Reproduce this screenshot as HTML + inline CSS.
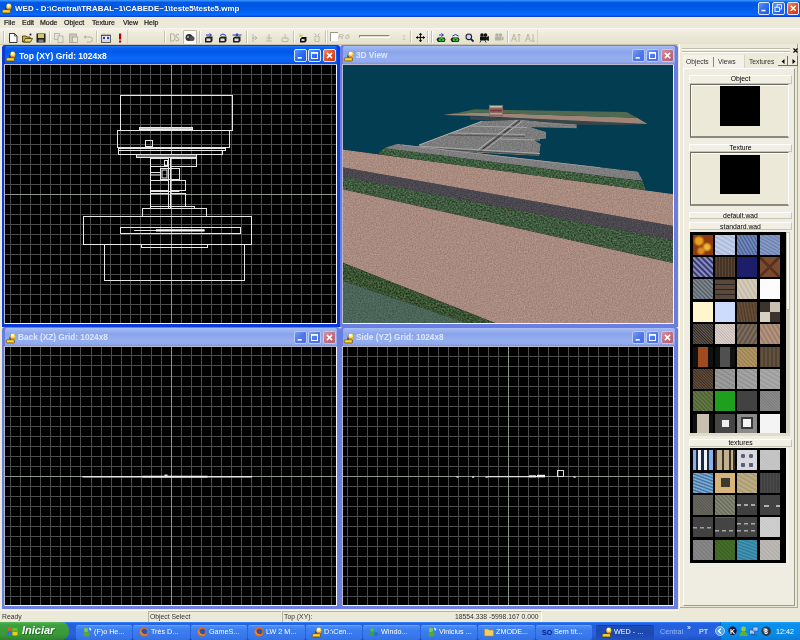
<!DOCTYPE html><html><head><meta charset="utf-8"><title>WED</title><style>
*{margin:0;padding:0;box-sizing:border-box}
html,body{width:800px;height:640px;overflow:hidden;background:#ece9d8;font-family:"Liberation Sans", sans-serif}
body{position:relative}
.a{position:absolute}
.t{position:absolute;white-space:pre;line-height:1;will-change:transform}
svg{position:absolute;overflow:visible}
</style></head><body><div class="a" style="left:0px;top:0px;width:800px;height:17px;background:linear-gradient(to bottom,#3d9bff 0px,#2a80f8 1px,#0058e6 2.5px,#0056e0 6px,#0062f2 11px,#066afa 15px,#0a4fd8 16px,#1535c8 17px)"></div><svg style="left:2px;top:3px;transform:scale(1.0);transform-origin:0 0" width="10" height="10" viewBox="0 0 10 10"><path d="M3.2,6.6 Q3.5,1.2 6.6,0.4 L5,6.8 Z" fill="#20206a" opacity="0.85"/><ellipse cx="6.8" cy="3.4" rx="2.5" ry="3" fill="#f8e040"/><ellipse cx="6.5" cy="2.4" rx="1.5" ry="1.4" fill="#fffad0"/><path d="M5,5.2 Q7,6.6 9.2,4.6" stroke="#e86a20" stroke-width="0.8" fill="none"/><rect x="0.3" y="6.8" width="8.2" height="3.2" rx="0.6" fill="#f0c000" stroke="#2a2a50" stroke-width="0.5"/><rect x="1.2" y="7.6" width="6" height="1" fill="#ffe860"/></svg><div class="t" style="left:15px;top:4.5px;font-size:8px;color:#fff;font-weight:bold;text-shadow:1px 0 0 rgba(0,20,120,.35)">WED - D:\Central\TRABAL~1\CABEDE~1\teste5\teste5.wmp</div><div class="a" style="left:757.5px;top:2px;width:12.5px;height:12.5px;background:linear-gradient(135deg,#5a9cff,#2f6ff0 45%,#1f58e0);border:1px solid #dce8ff;border-radius:2px"></div><svg style="left:757.5px;top:2px;" width="12.5" height="12.5" viewBox="0 0 12.5 12.5"><rect x="3.5000000000000004" y="7.75" width="4.0" height="1.6" fill="#fff"/></svg><div class="a" style="left:772px;top:2px;width:12.5px;height:12.5px;background:linear-gradient(135deg,#5a9cff,#2f6ff0 45%,#1f58e0);border:1px solid #dce8ff;border-radius:2px"></div><svg style="left:772px;top:2px;" width="12.5" height="12.5" viewBox="0 0 12.5 12.5"><rect x="5.0" y="2.75" width="4.5" height="4.25" fill="none" stroke="#fff" stroke-width="0.9"/><rect x="3.0" y="5.25" width="4.5" height="4.25" fill="#2f6ff0" stroke="#fff" stroke-width="0.9"/></svg><div class="a" style="left:786.5px;top:2px;width:12.5px;height:12.5px;background:linear-gradient(135deg,#f08a6a,#e0552e 45%,#c83a18);border:1px solid #dce8ff;border-radius:2px"></div><svg style="left:786.5px;top:2px;" width="12.5" height="12.5" viewBox="0 0 12.5 12.5"><path d="M3.75,3.75 L8.75,8.75 M8.75,3.75 L3.75,8.75" stroke="#fff" stroke-width="1.5"/></svg><div class="a" style="left:0px;top:17px;width:800px;height:11px;background:#ece9d8"></div><div class="t" style="left:4px;top:18.6px;font-size:7px;color:#1a1a1a;font-weight:normal;-webkit-text-stroke:0.2px #1a1a1a">File</div><div class="t" style="left:21.5px;top:18.6px;font-size:7px;color:#1a1a1a;font-weight:normal;-webkit-text-stroke:0.2px #1a1a1a">Edit</div><div class="t" style="left:40px;top:18.6px;font-size:7px;color:#1a1a1a;font-weight:normal;-webkit-text-stroke:0.2px #1a1a1a">Mode</div><div class="t" style="left:64px;top:18.6px;font-size:7px;color:#1a1a1a;font-weight:normal;-webkit-text-stroke:0.2px #1a1a1a">Object</div><div class="t" style="left:92px;top:18.6px;font-size:7px;color:#1a1a1a;font-weight:normal;-webkit-text-stroke:0.2px #1a1a1a">Texture</div><div class="t" style="left:123px;top:18.6px;font-size:7px;color:#1a1a1a;font-weight:normal;-webkit-text-stroke:0.2px #1a1a1a">View</div><div class="t" style="left:144px;top:18.6px;font-size:7px;color:#1a1a1a;font-weight:normal;-webkit-text-stroke:0.2px #1a1a1a">Help</div><div class="a" style="left:0px;top:28px;width:800px;height:1px;background:#f8f6ee"></div><div class="a" style="left:0px;top:29px;width:800px;height:16px;background:linear-gradient(to bottom,#f4f2e8,#ece9d8 40%,#e4e0cc)"></div><div class="a" style="left:0px;top:44px;width:800px;height:1px;background:#c8c4b0"></div><div class="a" style="left:3px;top:31px;width:1px;height:12px;background:#c5c2b2"></div><div class="a" style="left:4px;top:31px;width:1px;height:12px;background:#fff"></div><div class="a" style="left:49px;top:31px;width:1px;height:12px;background:#c5c2b2"></div><div class="a" style="left:50px;top:31px;width:1px;height:12px;background:#fff"></div><div class="a" style="left:96px;top:31px;width:1px;height:12px;background:#c5c2b2"></div><div class="a" style="left:97px;top:31px;width:1px;height:12px;background:#fff"></div><div class="a" style="left:164px;top:31px;width:1px;height:12px;background:#c5c2b2"></div><div class="a" style="left:165px;top:31px;width:1px;height:12px;background:#fff"></div><div class="a" style="left:198.5px;top:31px;width:1px;height:12px;background:#c5c2b2"></div><div class="a" style="left:199.5px;top:31px;width:1px;height:12px;background:#fff"></div><div class="a" style="left:245.5px;top:31px;width:1px;height:12px;background:#c5c2b2"></div><div class="a" style="left:246.5px;top:31px;width:1px;height:12px;background:#fff"></div><div class="a" style="left:292.5px;top:31px;width:1px;height:12px;background:#c5c2b2"></div><div class="a" style="left:293.5px;top:31px;width:1px;height:12px;background:#fff"></div><div class="a" style="left:324.5px;top:31px;width:1px;height:12px;background:#c5c2b2"></div><div class="a" style="left:325.5px;top:31px;width:1px;height:12px;background:#fff"></div><div class="a" style="left:410px;top:31px;width:1px;height:12px;background:#c5c2b2"></div><div class="a" style="left:411px;top:31px;width:1px;height:12px;background:#fff"></div><div class="a" style="left:427px;top:31px;width:1px;height:12px;background:#c5c2b2"></div><div class="a" style="left:428px;top:31px;width:1px;height:12px;background:#fff"></div><div class="a" style="left:431px;top:31px;width:1px;height:12px;background:#c5c2b2"></div><div class="a" style="left:432px;top:31px;width:1px;height:12px;background:#fff"></div><div class="a" style="left:506.5px;top:31px;width:1px;height:12px;background:#c5c2b2"></div><div class="a" style="left:507.5px;top:31px;width:1px;height:12px;background:#fff"></div><div class="a" style="left:127px;top:30px;width:1px;height:14px;background:#d8d4c2"></div><div class="a" style="left:327px;top:30px;width:1px;height:14px;background:#d8d4c2"></div><div class="a" style="left:537px;top:30px;width:1px;height:14px;background:#d8d4c2"></div><svg style="left:8.5px;top:32.5px;" width="9" height="10" viewBox="0 0 9 10"><path d="M0.5,0.5 H5.5 L8,3 V9.5 H0.5 Z" fill="#fff" stroke="#222" stroke-width="0.9"/><path d="M5.5,0.5 V3 H8" fill="none" stroke="#222" stroke-width="0.7"/></svg><svg style="left:21.5px;top:32.5px;" width="11" height="10" viewBox="0 0 11 10"><path d="M0.5,3 H4 L5,4 H8 V9 H0.5 Z" fill="#c8b040" stroke="#3a3000" stroke-width="0.8"/><path d="M1.5,9 L3.5,5.5 H10.5 L8.5,9 Z" fill="#e8d870" stroke="#3a3000" stroke-width="0.8"/><circle cx="8.5" cy="1.5" r="1" fill="#222"/></svg><svg style="left:36px;top:32.5px;" width="10" height="10" viewBox="0 0 10 10"><rect x="0.5" y="0.5" width="9" height="9" fill="#202020"/><rect x="2" y="1" width="6" height="4" fill="#d0c870"/><rect x="2.5" y="6.5" width="5" height="3" fill="#808080"/></svg><svg style="left:54px;top:32.5px;" width="10" height="10" viewBox="0 0 10 10"><rect x="0.5" y="0.5" width="5" height="6" fill="#e8e6dc" stroke="#b0ae9e" stroke-width="0.8"/><rect x="4" y="3" width="5" height="6.5" fill="#e8e6dc" stroke="#b0ae9e" stroke-width="0.8"/></svg><svg style="left:69px;top:32.5px;" width="10" height="10" viewBox="0 0 10 10"><rect x="0.5" y="1" width="7" height="8.5" fill="#c8c6b8" stroke="#a8a696" stroke-width="0.8"/><rect x="3.5" y="4" width="5" height="5.5" fill="#e8e6dc" stroke="#a8a696" stroke-width="0.8"/></svg><svg style="left:82.5px;top:32.5px;" width="10" height="10" viewBox="0 0 10 10"><path d="M2,4 H7 A2.5,2.5 0 0 1 7,9 H4" fill="none" stroke="#b4b2a2" stroke-width="1"/><path d="M0.5,4 L3,2 V6 Z" fill="#b4b2a2"/></svg><svg style="left:101px;top:32.5px;" width="10" height="10" viewBox="0 0 10 10"><rect x="0.5" y="2.5" width="9" height="7" fill="#d8d8d8" stroke="#404040" stroke-width="0.8"/><rect x="1.5" y="3.5" width="7" height="3" fill="#fff"/><circle cx="3" cy="5" r="1.2" fill="#3030c0"/><circle cx="7" cy="5" r="1.2" fill="#3030c0"/><path d="M1,1 V2.5 M3,0.5 V2.5 M5,1 V2.5 M7,0.5 V2.5 M9,1 V2.5" stroke="#404040" stroke-width="0.6"/></svg><svg style="left:117.5px;top:33px;" width="5" height="10" viewBox="0 0 5 10"><rect x="1" y="0.5" width="2.2" height="6" fill="#b00000"/><rect x="1" y="7.5" width="2.2" height="2" fill="#b00000"/></svg><svg style="left:170px;top:33px;" width="10" height="10" viewBox="0 0 10 10"><path d="M0.5,1 H3 Q5,1 5,4.5 Q5,8 3,8 H0.5 Z" fill="none" stroke="#aaa89a" stroke-width="0.9"/><path d="M9,1.5 Q6,0.5 6,3 Q6,4.5 8,4.8 Q9.5,5.5 8.5,7.5 Q7,8.5 5.5,7" fill="none" stroke="#aaa89a" stroke-width="0.9"/></svg><div class="a" style="left:183px;top:30px;width:13.5px;height:14.5px;background:#fbfaf6;border:1px solid #c0bcaa;border-radius:1px"></div><svg style="left:185px;top:33px;" width="10" height="10" viewBox="0 0 10 10"><ellipse cx="4" cy="4.5" rx="3.5" ry="3.5" fill="#303030"/><ellipse cx="7" cy="5.5" rx="2.5" ry="2.5" fill="#505050"/><circle cx="3" cy="4" r="1" fill="#c0c0c0"/></svg><svg style="left:204px;top:32.5px;" width="10" height="10" viewBox="0 0 10 10"><path d="M2,2 H7 M5.5,0.5 L7.5,2 L5.5,3.5" stroke="#2030d0" stroke-width="1" fill="none"/><path d="M1,5 L3,3.5 H8.5 V8 L7,9.5 H1 Z" fill="#202020"/><rect x="2.5" y="5.5" width="4" height="2.5" fill="#e0e0e0"/></svg><svg style="left:218px;top:32.5px;" width="10" height="10" viewBox="0 0 10 10"><path d="M2,2.5 Q5,-0.5 8,2.5" stroke="#2030d0" stroke-width="1" fill="none"/><path d="M1,5 L3,3.5 H8.5 V8 L7,9.5 H1 Z" fill="#202020"/><rect x="2.5" y="5.5" width="4" height="2.5" fill="#e0e0e0"/></svg><svg style="left:232px;top:32.5px;" width="10" height="10" viewBox="0 0 10 10"><path d="M0.5,2 H9.5 M5,0 V3" stroke="#2030d0" stroke-width="1" fill="none"/><circle cx="5" cy="2" r="1" fill="#2030d0"/><path d="M1,5 L3,3.5 H8.5 V8 L7,9.5 H1 Z" fill="#202020"/><rect x="2.5" y="5.5" width="4" height="2.5" fill="#e0e0e0"/></svg><svg style="left:250.5px;top:33px;" width="8" height="10" viewBox="0 0 8 10"><path d="M1,5 H6 M4,3 L6,5 L4,7 M2,1 V9" stroke="#b4b2a4" stroke-width="0.9" fill="none"/></svg><svg style="left:265px;top:33px;" width="8" height="10" viewBox="0 0 8 10"><path d="M1,8 H7 M1,5 H7 M4,1 V8" stroke="#b4b2a4" stroke-width="0.9" fill="none"/></svg><svg style="left:280.5px;top:33px;" width="8" height="10" viewBox="0 0 8 10"><path d="M1,8.5 H7 V5 H1 Z M4,1 V5" stroke="#b4b2a4" stroke-width="0.9" fill="none"/></svg><svg style="left:297.5px;top:32.5px;" width="10" height="10" viewBox="0 0 10 10"><path d="M2,0.5 L3,2.5 L5,1 L4,3.5 L1,3.5 Z" fill="#b8d030"/><path d="M2,6 L4,4 H8.5 V8 L7,9.5 H2 Z" fill="#101010"/><rect x="3.5" y="6" width="3" height="2" fill="#d0d0d0"/></svg><svg style="left:312.5px;top:33px;" width="8" height="10" viewBox="0 0 8 10"><path d="M1.5,0.5 L3,2 M6.5,0.5 L5,2 M2,3 H6 V8.5 H2 Z" stroke="#b4b2a4" stroke-width="0.9" fill="none"/></svg><div class="a" style="left:330px;top:32px;width:7.5px;height:9px;background:#fff;border-left:1.5px solid #9a9888;border-top:1.5px solid #9a9888"></div><div class="t" style="left:338px;top:33px;font-size:8px;color:#c0beb0;font-weight:bold;font-style:italic">R</div><div class="t" style="left:345px;top:33px;font-size:8px;color:#c0beb0;font-weight:bold;font-style:italic">ö</div><div class="a" style="left:359px;top:35px;width:31px;height:3px;border-top:1px solid #8a8878;border-left:1px solid #8a8878;border-bottom:1px solid #fff;border-right:1px solid #fff;background:#e0dccb"></div><div class="t" style="left:402px;top:33.5px;font-size:7px;color:#c0beb0;font-weight:normal;">1</div><svg style="left:416px;top:33px;" width="9" height="9" viewBox="0 0 9 9"><path d="M4.5,0 V9 M0,4.5 H9" stroke="#111" stroke-width="1.2"/><path d="M4.5,0 L2.8,2 H6.2 Z M4.5,9 L2.8,7 H6.2 Z M0,4.5 L2,2.8 V6.2 Z M9,4.5 L7,2.8 V6.2 Z" fill="#111"/></svg><svg style="left:435.5px;top:32.5px;" width="10" height="10" viewBox="0 0 10 10"><path d="M3,2 H7 M5.5,0.5 L7.5,2 L5.5,3.5" stroke="#2030d0" stroke-width="1" fill="none"/><path d="M0.5,6.5 L2,4.5 H8.5 L9.5,6.5 L8.5,9 H2 Z" fill="#102010"/><ellipse cx="5.5" cy="6.7" rx="3" ry="1.6" fill="#40c040"/><circle cx="5.5" cy="6.7" r="0.8" fill="#101010"/></svg><svg style="left:449.5px;top:32.5px;" width="10" height="10" viewBox="0 0 10 10"><path d="M2.5,3 Q5.5,0 8.5,3" stroke="#2030d0" stroke-width="1" fill="none"/><path d="M0.5,6.5 L2,4.5 H8.5 L9.5,6.5 L8.5,9 H2 Z" fill="#102010"/><ellipse cx="5.5" cy="6.7" rx="3" ry="1.6" fill="#40c040"/><circle cx="5.5" cy="6.7" r="0.8" fill="#101010"/></svg><svg style="left:465px;top:32.5px;" width="9" height="9" viewBox="0 0 9 9"><circle cx="3.8" cy="3.8" r="2.8" fill="#c8d0ff" stroke="#202020" stroke-width="1.1"/><path d="M5.8,5.8 L8.5,8.5" stroke="#202020" stroke-width="1.8"/></svg><svg style="left:479px;top:33px;" width="10" height="10" viewBox="0 0 10 10"><circle cx="3" cy="2" r="1.8" fill="#101010"/><circle cx="6.5" cy="2" r="1.8" fill="#101010"/><rect x="1" y="3.5" width="6.5" height="4" fill="#101010"/><path d="M7.5,4.5 L9.5,3.5 V7.5 L7.5,6.5 Z M2,7.5 L1,9.5 M6,7.5 L7,9.5" fill="#101010" stroke="#101010" stroke-width="0.8"/></svg><svg style="left:493.5px;top:33px;" width="10" height="10" viewBox="0 0 10 10"><circle cx="3" cy="2" r="1.8" fill="#b4b2a4"/><circle cx="6.5" cy="2" r="1.8" fill="#b4b2a4"/><rect x="1" y="3.5" width="6.5" height="4" fill="#b4b2a4"/><path d="M7.5,4.5 L9.5,3.5 V7.5 L7.5,6.5 Z" fill="#b4b2a4"/></svg><svg style="left:510.5px;top:33px;" width="10" height="10" viewBox="0 0 10 10"><path d="M0.5,8.5 L3,1 L5.5,8.5 M1.5,6 H4.5 M8,9 V1 M6.5,2.5 L8,1 L9.5,2.5" stroke="#b4b2a4" stroke-width="0.9" fill="none"/></svg><svg style="left:525px;top:33px;" width="10" height="10" viewBox="0 0 10 10"><path d="M0.5,8.5 L3,1 L5.5,8.5 M1.5,6 H4.5 M8,1 V9 M6.5,7.5 L8,9 L9.5,7.5" stroke="#b4b2a4" stroke-width="0.9" fill="none"/></svg><div class="a" style="left:0px;top:45px;width:679px;height:565px;background:#ece9d8"></div><div class="a" style="left:2px;top:45px;width:338px;height:282px;background:#0a3bd6;border-radius:3px 3px 0 0"></div><div class="a" style="left:5px;top:46px;width:332px;height:18px;background:linear-gradient(to bottom,#2a7cf8 0px,#0a5ef0 2px,#0058e8 6px,#0a68f8 12px,#0a60f0 16px,#0848d8 18px);border-radius:2px 2px 0 0"></div><svg style="left:5.8px;top:50.5px;transform:scale(1.0);transform-origin:0 0" width="10" height="10" viewBox="0 0 10 10"><path d="M3.2,6.6 Q3.5,1.2 6.6,0.4 L5,6.8 Z" fill="#20206a" opacity="0.85"/><ellipse cx="6.8" cy="3.4" rx="2.5" ry="3" fill="#f8e040"/><ellipse cx="6.5" cy="2.4" rx="1.5" ry="1.4" fill="#fffad0"/><path d="M5,5.2 Q7,6.6 9.2,4.6" stroke="#e86a20" stroke-width="0.8" fill="none"/><rect x="0.3" y="6.8" width="8.2" height="3.2" rx="0.6" fill="#f0c000" stroke="#2a2a50" stroke-width="0.5"/><rect x="1.2" y="7.6" width="6" height="1" fill="#ffe860"/></svg><div class="t" style="left:18.5px;top:52px;font-size:8.5px;color:#fff;font-weight:bold;">Top (XY) Grid: 1024x8</div><div class="a" style="left:323px;top:49px;width:13px;height:13px;background:linear-gradient(135deg,#f08a6a,#e0552e 45%,#c83a18);border:1px solid #dce8ff;border-radius:2px"></div><svg style="left:323px;top:49px;" width="13" height="13" viewBox="0 0 13 13"><path d="M3.9,3.9 L9.1,9.1 M9.1,3.9 L3.9,9.1" stroke="#fff" stroke-width="1.5"/></svg><div class="a" style="left:308px;top:49px;width:13px;height:13px;background:linear-gradient(135deg,#5a9cff,#2f6ff0 45%,#1f58e0);border:1px solid #dce8ff;border-radius:2px"></div><svg style="left:308px;top:49px;" width="13" height="13" viewBox="0 0 13 13"><rect x="3.5100000000000002" y="3.5100000000000002" width="5.98" height="5.98" fill="none" stroke="#fff" stroke-width="1"/><rect x="3.5100000000000002" y="3.5100000000000002" width="5.98" height="1.3" fill="#fff"/></svg><div class="a" style="left:294px;top:49px;width:13px;height:13px;background:linear-gradient(135deg,#5a9cff,#2f6ff0 45%,#1f58e0);border:1px solid #dce8ff;border-radius:2px"></div><svg style="left:294px;top:49px;" width="13" height="13" viewBox="0 0 13 13"><rect x="3.6400000000000006" y="8.06" width="4.16" height="1.6" fill="#fff"/></svg><div class="a" style="left:340px;top:45px;width:338px;height:282px;background:#6a7ee2;border-radius:3px 3px 0 0"></div><div class="a" style="left:343px;top:46px;width:332px;height:18px;background:linear-gradient(to bottom,#aac0f4 0px,#9cb4f0 2px,#8aa4ec 6px,#94aeee 12px,#90aaee 16px,#7c94e0 18px);border-radius:2px 2px 0 0"></div><svg style="left:343.8px;top:50.5px;transform:scale(1.0);transform-origin:0 0" width="10" height="10" viewBox="0 0 10 10"><path d="M3.2,6.6 Q3.5,1.2 6.6,0.4 L5,6.8 Z" fill="#20206a" opacity="0.85"/><ellipse cx="6.8" cy="3.4" rx="2.5" ry="3" fill="#f8e040"/><ellipse cx="6.5" cy="2.4" rx="1.5" ry="1.4" fill="#fffad0"/><path d="M5,5.2 Q7,6.6 9.2,4.6" stroke="#e86a20" stroke-width="0.8" fill="none"/><rect x="0.3" y="6.8" width="8.2" height="3.2" rx="0.6" fill="#f0c000" stroke="#2a2a50" stroke-width="0.5"/><rect x="1.2" y="7.6" width="6" height="1" fill="#ffe860"/></svg><div class="t" style="left:356px;top:52px;font-size:8.25px;color:#dce6fc;font-weight:bold;">3D View</div><div class="a" style="left:661px;top:49px;width:13px;height:13px;background:linear-gradient(135deg,#d890a0,#c07080 50%,#b06070);border:1px solid #b8c8f8;border-radius:2px"></div><svg style="left:661px;top:49px;" width="13" height="13" viewBox="0 0 13 13"><path d="M3.9,3.9 L9.1,9.1 M9.1,3.9 L3.9,9.1" stroke="#fff" stroke-width="1.5"/></svg><div class="a" style="left:646px;top:49px;width:13px;height:13px;background:linear-gradient(135deg,#7a9cf4,#5078e8 50%,#4a6ee0);border:1px solid #b8c8f8;border-radius:2px"></div><svg style="left:646px;top:49px;" width="13" height="13" viewBox="0 0 13 13"><rect x="3.5100000000000002" y="3.5100000000000002" width="5.98" height="5.98" fill="none" stroke="#fff" stroke-width="1"/><rect x="3.5100000000000002" y="3.5100000000000002" width="5.98" height="1.3" fill="#fff"/></svg><div class="a" style="left:632px;top:49px;width:13px;height:13px;background:linear-gradient(135deg,#7a9cf4,#5078e8 50%,#4a6ee0);border:1px solid #b8c8f8;border-radius:2px"></div><svg style="left:632px;top:49px;" width="13" height="13" viewBox="0 0 13 13"><rect x="3.6400000000000006" y="8.06" width="4.16" height="1.6" fill="#fff"/></svg><div class="a" style="left:2px;top:327px;width:338px;height:283px;background:#6a7ee2;border-radius:3px 3px 0 0"></div><div class="a" style="left:5px;top:328px;width:332px;height:18px;background:linear-gradient(to bottom,#aac0f4 0px,#9cb4f0 2px,#8aa4ec 6px,#94aeee 12px,#90aaee 16px,#7c94e0 18px);border-radius:2px 2px 0 0"></div><svg style="left:5.8px;top:332.5px;transform:scale(1.0);transform-origin:0 0" width="10" height="10" viewBox="0 0 10 10"><path d="M3.2,6.6 Q3.5,1.2 6.6,0.4 L5,6.8 Z" fill="#20206a" opacity="0.85"/><ellipse cx="6.8" cy="3.4" rx="2.5" ry="3" fill="#f8e040"/><ellipse cx="6.5" cy="2.4" rx="1.5" ry="1.4" fill="#fffad0"/><path d="M5,5.2 Q7,6.6 9.2,4.6" stroke="#e86a20" stroke-width="0.8" fill="none"/><rect x="0.3" y="6.8" width="8.2" height="3.2" rx="0.6" fill="#f0c000" stroke="#2a2a50" stroke-width="0.5"/><rect x="1.2" y="7.6" width="6" height="1" fill="#ffe860"/></svg><div class="t" style="left:18px;top:334px;font-size:8.25px;color:#dce6fc;font-weight:bold;">Back (XZ) Grid: 1024x8</div><div class="a" style="left:323px;top:331px;width:13px;height:13px;background:linear-gradient(135deg,#d890a0,#c07080 50%,#b06070);border:1px solid #b8c8f8;border-radius:2px"></div><svg style="left:323px;top:331px;" width="13" height="13" viewBox="0 0 13 13"><path d="M3.9,3.9 L9.1,9.1 M9.1,3.9 L3.9,9.1" stroke="#fff" stroke-width="1.5"/></svg><div class="a" style="left:308px;top:331px;width:13px;height:13px;background:linear-gradient(135deg,#7a9cf4,#5078e8 50%,#4a6ee0);border:1px solid #b8c8f8;border-radius:2px"></div><svg style="left:308px;top:331px;" width="13" height="13" viewBox="0 0 13 13"><rect x="3.5100000000000002" y="3.5100000000000002" width="5.98" height="5.98" fill="none" stroke="#fff" stroke-width="1"/><rect x="3.5100000000000002" y="3.5100000000000002" width="5.98" height="1.3" fill="#fff"/></svg><div class="a" style="left:294px;top:331px;width:13px;height:13px;background:linear-gradient(135deg,#7a9cf4,#5078e8 50%,#4a6ee0);border:1px solid #b8c8f8;border-radius:2px"></div><svg style="left:294px;top:331px;" width="13" height="13" viewBox="0 0 13 13"><rect x="3.6400000000000006" y="8.06" width="4.16" height="1.6" fill="#fff"/></svg><div class="a" style="left:340px;top:327px;width:338px;height:283px;background:#6a7ee2;border-radius:3px 3px 0 0"></div><div class="a" style="left:343px;top:328px;width:332px;height:18px;background:linear-gradient(to bottom,#aac0f4 0px,#9cb4f0 2px,#8aa4ec 6px,#94aeee 12px,#90aaee 16px,#7c94e0 18px);border-radius:2px 2px 0 0"></div><svg style="left:343.8px;top:332.5px;transform:scale(1.0);transform-origin:0 0" width="10" height="10" viewBox="0 0 10 10"><path d="M3.2,6.6 Q3.5,1.2 6.6,0.4 L5,6.8 Z" fill="#20206a" opacity="0.85"/><ellipse cx="6.8" cy="3.4" rx="2.5" ry="3" fill="#f8e040"/><ellipse cx="6.5" cy="2.4" rx="1.5" ry="1.4" fill="#fffad0"/><path d="M5,5.2 Q7,6.6 9.2,4.6" stroke="#e86a20" stroke-width="0.8" fill="none"/><rect x="0.3" y="6.8" width="8.2" height="3.2" rx="0.6" fill="#f0c000" stroke="#2a2a50" stroke-width="0.5"/><rect x="1.2" y="7.6" width="6" height="1" fill="#ffe860"/></svg><div class="t" style="left:356px;top:334px;font-size:8.25px;color:#dce6fc;font-weight:bold;">Side (YZ) Grid: 1024x8</div><div class="a" style="left:661px;top:331px;width:13px;height:13px;background:linear-gradient(135deg,#d890a0,#c07080 50%,#b06070);border:1px solid #b8c8f8;border-radius:2px"></div><svg style="left:661px;top:331px;" width="13" height="13" viewBox="0 0 13 13"><path d="M3.9,3.9 L9.1,9.1 M9.1,3.9 L3.9,9.1" stroke="#fff" stroke-width="1.5"/></svg><div class="a" style="left:646px;top:331px;width:13px;height:13px;background:linear-gradient(135deg,#7a9cf4,#5078e8 50%,#4a6ee0);border:1px solid #b8c8f8;border-radius:2px"></div><svg style="left:646px;top:331px;" width="13" height="13" viewBox="0 0 13 13"><rect x="3.5100000000000002" y="3.5100000000000002" width="5.98" height="5.98" fill="none" stroke="#fff" stroke-width="1"/><rect x="3.5100000000000002" y="3.5100000000000002" width="5.98" height="1.3" fill="#fff"/></svg><div class="a" style="left:632px;top:331px;width:13px;height:13px;background:linear-gradient(135deg,#7a9cf4,#5078e8 50%,#4a6ee0);border:1px solid #b8c8f8;border-radius:2px"></div><svg style="left:632px;top:331px;" width="13" height="13" viewBox="0 0 13 13"><rect x="3.6400000000000006" y="8.06" width="4.16" height="1.6" fill="#fff"/></svg><div class="a" style="left:4px;top:64px;width:333px;height:260px;background:#f4f4f4;border-top:1px solid #b8b8c8;border-left:1px solid #b8b8c8"></div><div class="a" style="left:5px;top:65px;width:331px;height:258px;background:#000;overflow:hidden"><svg style="left:0;top:0" width="331" height="258"><g shape-rendering="crispEdges"><rect x="5" y="0" width="1" height="258" fill="#4c4c4c"/><rect x="15" y="0" width="1" height="258" fill="#4c4c4c"/><rect x="25" y="0" width="1" height="258" fill="#4c4c4c"/><rect x="35" y="0" width="1" height="258" fill="#4c4c4c"/><rect x="45" y="0" width="1" height="258" fill="#4c4c4c"/><rect x="55" y="0" width="1" height="258" fill="#4c4c4c"/><rect x="65" y="0" width="1" height="258" fill="#4c4c4c"/><rect x="75" y="0" width="1" height="258" fill="#4c4c4c"/><rect x="85" y="0" width="1" height="258" fill="#4c4c4c"/><rect x="95" y="0" width="1" height="258" fill="#4c4c4c"/><rect x="105" y="0" width="1" height="258" fill="#4c4c4c"/><rect x="115" y="0" width="1" height="258" fill="#4c4c4c"/><rect x="125" y="0" width="1" height="258" fill="#4c4c4c"/><rect x="135" y="0" width="1" height="258" fill="#4c4c4c"/><rect x="145" y="0" width="1" height="258" fill="#4c4c4c"/><rect x="155" y="0" width="1" height="258" fill="#4c4c4c"/><rect x="176" y="0" width="1" height="258" fill="#4c4c4c"/><rect x="186" y="0" width="1" height="258" fill="#4c4c4c"/><rect x="196" y="0" width="1" height="258" fill="#4c4c4c"/><rect x="206" y="0" width="1" height="258" fill="#4c4c4c"/><rect x="216" y="0" width="1" height="258" fill="#4c4c4c"/><rect x="226" y="0" width="1" height="258" fill="#4c4c4c"/><rect x="236" y="0" width="1" height="258" fill="#4c4c4c"/><rect x="246" y="0" width="1" height="258" fill="#4c4c4c"/><rect x="256" y="0" width="1" height="258" fill="#4c4c4c"/><rect x="266" y="0" width="1" height="258" fill="#4c4c4c"/><rect x="276" y="0" width="1" height="258" fill="#4c4c4c"/><rect x="286" y="0" width="1" height="258" fill="#4c4c4c"/><rect x="296" y="0" width="1" height="258" fill="#4c4c4c"/><rect x="306" y="0" width="1" height="258" fill="#4c4c4c"/><rect x="316" y="0" width="1" height="258" fill="#4c4c4c"/><rect x="326" y="0" width="1" height="258" fill="#4c4c4c"/><rect x="0" y="9" width="331" height="1" fill="#4c4c4c"/><rect x="0" y="19" width="331" height="1" fill="#4c4c4c"/><rect x="0" y="29" width="331" height="1" fill="#4c4c4c"/><rect x="0" y="39" width="331" height="1" fill="#4c4c4c"/><rect x="0" y="49" width="331" height="1" fill="#4c4c4c"/><rect x="0" y="59" width="331" height="1" fill="#4c4c4c"/><rect x="0" y="69" width="331" height="1" fill="#4c4c4c"/><rect x="0" y="79" width="331" height="1" fill="#4c4c4c"/><rect x="0" y="89" width="331" height="1" fill="#4c4c4c"/><rect x="0" y="99" width="331" height="1" fill="#4c4c4c"/><rect x="0" y="109" width="331" height="1" fill="#4c4c4c"/><rect x="0" y="119" width="331" height="1" fill="#4c4c4c"/><rect x="0" y="139" width="331" height="1" fill="#4c4c4c"/><rect x="0" y="149" width="331" height="1" fill="#4c4c4c"/><rect x="0" y="159" width="331" height="1" fill="#4c4c4c"/><rect x="0" y="169" width="331" height="1" fill="#4c4c4c"/><rect x="0" y="179" width="331" height="1" fill="#4c4c4c"/><rect x="0" y="189" width="331" height="1" fill="#4c4c4c"/><rect x="0" y="199" width="331" height="1" fill="#4c4c4c"/><rect x="0" y="209" width="331" height="1" fill="#4c4c4c"/><rect x="0" y="219" width="331" height="1" fill="#4c4c4c"/><rect x="0" y="229" width="331" height="1" fill="#4c4c4c"/><rect x="0" y="239" width="331" height="1" fill="#4c4c4c"/><rect x="0" y="249" width="331" height="1" fill="#4c4c4c"/><rect x="166" y="0" width="1" height="258" fill="#8e988e"/><rect x="0" y="129" width="331" height="1" fill="#8e988e"/></g><rect x="115.50" y="30.50" width="112.00" height="35.00" fill="none" stroke="#e8e8e8" stroke-width="1.0"/><rect x="134.50" y="62.50" width="53.00" height="2.00" fill="#c8c8c8" stroke="#e8e8e8" stroke-width="1.0"/><rect x="112.50" y="65.50" width="112.00" height="17.00" fill="none" stroke="#e8e8e8" stroke-width="1.0"/><rect x="140.50" y="75.50" width="7.00" height="6.00" fill="none" stroke="#e8e8e8" stroke-width="1.0"/><rect x="113.50" y="83.50" width="107.00" height="2.00" fill="none" stroke="#e8e8e8" stroke-width="1.0"/><rect x="113.50" y="85.50" width="104.00" height="4.00" fill="none" stroke="#e8e8e8" stroke-width="1.0"/><rect x="131.50" y="89.50" width="60.00" height="3.00" fill="#707070" stroke="#e8e8e8" stroke-width="1.0"/><rect x="145.50" y="93.50" width="18.00" height="50.00" fill="none" stroke="#e8e8e8" stroke-width="1.0"/><line x1="165.50" y1="93.00" x2="165.50" y2="144.00" stroke="#e8e8e8" stroke-width="1.0"/><rect x="165.50" y="93.50" width="26.00" height="8.00" fill="none" stroke="#e8e8e8" stroke-width="1.0"/><line x1="146.00" y1="101.50" x2="163.00" y2="101.50" stroke="#e8e8e8" stroke-width="1.0"/><rect x="155.50" y="103.50" width="19.00" height="11.00" fill="none" stroke="#e8e8e8" stroke-width="1.0"/><rect x="157.00" y="105.00" width="5.00" height="8.00" fill="none" stroke="#e8e8e8" stroke-width="1.0"/><line x1="146.00" y1="107.50" x2="155.00" y2="107.50" stroke="#e8e8e8" stroke-width="1.0"/><line x1="146.00" y1="110.00" x2="155.00" y2="110.00" stroke="#e8e8e8" stroke-width="1.0"/><rect x="159.50" y="95.50" width="3.00" height="5.00" fill="none" stroke="#e8e8e8" stroke-width="1.0"/><rect x="145.50" y="115.50" width="18.00" height="10.00" fill="none" stroke="#e8e8e8" stroke-width="1.0"/><rect x="165.50" y="115.50" width="15.00" height="10.00" fill="none" stroke="#e8e8e8" stroke-width="1.0"/><line x1="146.00" y1="126.50" x2="174.50" y2="126.50" stroke="#e8e8e8" stroke-width="1.0"/><rect x="145.50" y="128.50" width="18.00" height="13.00" fill="none" stroke="#e8e8e8" stroke-width="1.0"/><rect x="165.50" y="128.50" width="15.00" height="13.00" fill="none" stroke="#e8e8e8" stroke-width="1.0"/><rect x="145.50" y="141.50" width="44.00" height="2.00" fill="none" stroke="#e8e8e8" stroke-width="1.0"/><rect x="137.50" y="143.50" width="64.00" height="8.00" fill="none" stroke="#e8e8e8" stroke-width="1.0"/><rect x="78.50" y="151.50" width="168.00" height="28.00" fill="none" stroke="#e8e8e8" stroke-width="1.0"/><rect x="115.50" y="162.50" width="120.00" height="6.00" fill="none" stroke="#e8e8e8" stroke-width="1.0"/><line x1="129.00" y1="165.50" x2="199.50" y2="165.50" stroke="#e8e8e8" stroke-width="1.2"/><line x1="151.00" y1="165.30" x2="199.50" y2="165.30" stroke="#ffffff" stroke-width="2.2"/><rect x="136.50" y="179.50" width="66.00" height="3.00" fill="none" stroke="#e8e8e8" stroke-width="1.0"/><rect x="99.50" y="179.50" width="140.00" height="36.00" fill="none" stroke="#e8e8e8" stroke-width="1.0"/></svg></div><div class="a" style="left:4px;top:346px;width:333px;height:260px;background:#f4f4f4;border-top:1px solid #b8b8c8;border-left:1px solid #b8b8c8"></div><div class="a" style="left:5px;top:347px;width:331px;height:258px;background:#000;overflow:hidden"><svg style="left:0;top:0" width="331" height="258"><g shape-rendering="crispEdges"><rect x="5" y="0" width="1" height="258" fill="#4c4c4c"/><rect x="15" y="0" width="1" height="258" fill="#4c4c4c"/><rect x="25" y="0" width="1" height="258" fill="#4c4c4c"/><rect x="35" y="0" width="1" height="258" fill="#4c4c4c"/><rect x="45" y="0" width="1" height="258" fill="#4c4c4c"/><rect x="55" y="0" width="1" height="258" fill="#4c4c4c"/><rect x="65" y="0" width="1" height="258" fill="#4c4c4c"/><rect x="75" y="0" width="1" height="258" fill="#4c4c4c"/><rect x="86" y="0" width="1" height="258" fill="#4c4c4c"/><rect x="96" y="0" width="1" height="258" fill="#4c4c4c"/><rect x="106" y="0" width="1" height="258" fill="#4c4c4c"/><rect x="116" y="0" width="1" height="258" fill="#4c4c4c"/><rect x="126" y="0" width="1" height="258" fill="#4c4c4c"/><rect x="136" y="0" width="1" height="258" fill="#4c4c4c"/><rect x="146" y="0" width="1" height="258" fill="#4c4c4c"/><rect x="156" y="0" width="1" height="258" fill="#4c4c4c"/><rect x="176" y="0" width="1" height="258" fill="#4c4c4c"/><rect x="186" y="0" width="1" height="258" fill="#4c4c4c"/><rect x="196" y="0" width="1" height="258" fill="#4c4c4c"/><rect x="206" y="0" width="1" height="258" fill="#4c4c4c"/><rect x="216" y="0" width="1" height="258" fill="#4c4c4c"/><rect x="226" y="0" width="1" height="258" fill="#4c4c4c"/><rect x="236" y="0" width="1" height="258" fill="#4c4c4c"/><rect x="246" y="0" width="1" height="258" fill="#4c4c4c"/><rect x="256" y="0" width="1" height="258" fill="#4c4c4c"/><rect x="266" y="0" width="1" height="258" fill="#4c4c4c"/><rect x="276" y="0" width="1" height="258" fill="#4c4c4c"/><rect x="286" y="0" width="1" height="258" fill="#4c4c4c"/><rect x="296" y="0" width="1" height="258" fill="#4c4c4c"/><rect x="306" y="0" width="1" height="258" fill="#4c4c4c"/><rect x="316" y="0" width="1" height="258" fill="#4c4c4c"/><rect x="326" y="0" width="1" height="258" fill="#4c4c4c"/><rect x="0" y="8" width="331" height="1" fill="#4c4c4c"/><rect x="0" y="18" width="331" height="1" fill="#4c4c4c"/><rect x="0" y="29" width="331" height="1" fill="#4c4c4c"/><rect x="0" y="39" width="331" height="1" fill="#4c4c4c"/><rect x="0" y="49" width="331" height="1" fill="#4c4c4c"/><rect x="0" y="59" width="331" height="1" fill="#4c4c4c"/><rect x="0" y="69" width="331" height="1" fill="#4c4c4c"/><rect x="0" y="79" width="331" height="1" fill="#4c4c4c"/><rect x="0" y="89" width="331" height="1" fill="#4c4c4c"/><rect x="0" y="99" width="331" height="1" fill="#4c4c4c"/><rect x="0" y="109" width="331" height="1" fill="#4c4c4c"/><rect x="0" y="119" width="331" height="1" fill="#4c4c4c"/><rect x="0" y="139" width="331" height="1" fill="#4c4c4c"/><rect x="0" y="149" width="331" height="1" fill="#4c4c4c"/><rect x="0" y="159" width="331" height="1" fill="#4c4c4c"/><rect x="0" y="169" width="331" height="1" fill="#4c4c4c"/><rect x="0" y="179" width="331" height="1" fill="#4c4c4c"/><rect x="0" y="189" width="331" height="1" fill="#4c4c4c"/><rect x="0" y="199" width="331" height="1" fill="#4c4c4c"/><rect x="0" y="209" width="331" height="1" fill="#4c4c4c"/><rect x="0" y="219" width="331" height="1" fill="#4c4c4c"/><rect x="0" y="229" width="331" height="1" fill="#4c4c4c"/><rect x="0" y="239" width="331" height="1" fill="#4c4c4c"/><rect x="0" y="249" width="331" height="1" fill="#4c4c4c"/><rect x="166" y="0" width="1" height="258" fill="#8e988e"/><rect x="0" y="129" width="331" height="1" fill="#8e988e"/></g><line x1="77.5" y1="129.8" x2="247" y2="129.8" stroke="#e4e4e4" stroke-width="1.5"/><line x1="137.5" y1="129.60000000000002" x2="202.5" y2="129.60000000000002" stroke="#f4f4f4" stroke-width="1.6"/><rect x="159.5" y="127.5" width="3" height="2" fill="#e0e0e0"/></svg></div><div class="a" style="left:342px;top:346px;width:332px;height:260px;background:#f4f4f4;border-top:1px solid #b8b8c8;border-left:1px solid #b8b8c8"></div><div class="a" style="left:343px;top:347px;width:330px;height:258px;background:#000;overflow:hidden"><svg style="left:0;top:0" width="330" height="258"><g shape-rendering="crispEdges"><rect x="4" y="0" width="1" height="258" fill="#4c4c4c"/><rect x="14" y="0" width="1" height="258" fill="#4c4c4c"/><rect x="24" y="0" width="1" height="258" fill="#4c4c4c"/><rect x="34" y="0" width="1" height="258" fill="#4c4c4c"/><rect x="44" y="0" width="1" height="258" fill="#4c4c4c"/><rect x="54" y="0" width="1" height="258" fill="#4c4c4c"/><rect x="65" y="0" width="1" height="258" fill="#4c4c4c"/><rect x="75" y="0" width="1" height="258" fill="#4c4c4c"/><rect x="85" y="0" width="1" height="258" fill="#4c4c4c"/><rect x="95" y="0" width="1" height="258" fill="#4c4c4c"/><rect x="105" y="0" width="1" height="258" fill="#4c4c4c"/><rect x="115" y="0" width="1" height="258" fill="#4c4c4c"/><rect x="125" y="0" width="1" height="258" fill="#4c4c4c"/><rect x="135" y="0" width="1" height="258" fill="#4c4c4c"/><rect x="145" y="0" width="1" height="258" fill="#4c4c4c"/><rect x="155" y="0" width="1" height="258" fill="#4c4c4c"/><rect x="175" y="0" width="1" height="258" fill="#4c4c4c"/><rect x="185" y="0" width="1" height="258" fill="#4c4c4c"/><rect x="195" y="0" width="1" height="258" fill="#4c4c4c"/><rect x="205" y="0" width="1" height="258" fill="#4c4c4c"/><rect x="215" y="0" width="1" height="258" fill="#4c4c4c"/><rect x="225" y="0" width="1" height="258" fill="#4c4c4c"/><rect x="235" y="0" width="1" height="258" fill="#4c4c4c"/><rect x="245" y="0" width="1" height="258" fill="#4c4c4c"/><rect x="255" y="0" width="1" height="258" fill="#4c4c4c"/><rect x="265" y="0" width="1" height="258" fill="#4c4c4c"/><rect x="275" y="0" width="1" height="258" fill="#4c4c4c"/><rect x="285" y="0" width="1" height="258" fill="#4c4c4c"/><rect x="295" y="0" width="1" height="258" fill="#4c4c4c"/><rect x="305" y="0" width="1" height="258" fill="#4c4c4c"/><rect x="315" y="0" width="1" height="258" fill="#4c4c4c"/><rect x="325" y="0" width="1" height="258" fill="#4c4c4c"/><rect x="0" y="9" width="330" height="1" fill="#4c4c4c"/><rect x="0" y="19" width="330" height="1" fill="#4c4c4c"/><rect x="0" y="29" width="330" height="1" fill="#4c4c4c"/><rect x="0" y="39" width="330" height="1" fill="#4c4c4c"/><rect x="0" y="49" width="330" height="1" fill="#4c4c4c"/><rect x="0" y="59" width="330" height="1" fill="#4c4c4c"/><rect x="0" y="69" width="330" height="1" fill="#4c4c4c"/><rect x="0" y="79" width="330" height="1" fill="#4c4c4c"/><rect x="0" y="89" width="330" height="1" fill="#4c4c4c"/><rect x="0" y="99" width="330" height="1" fill="#4c4c4c"/><rect x="0" y="109" width="330" height="1" fill="#4c4c4c"/><rect x="0" y="119" width="330" height="1" fill="#4c4c4c"/><rect x="0" y="139" width="330" height="1" fill="#4c4c4c"/><rect x="0" y="149" width="330" height="1" fill="#4c4c4c"/><rect x="0" y="159" width="330" height="1" fill="#4c4c4c"/><rect x="0" y="169" width="330" height="1" fill="#4c4c4c"/><rect x="0" y="179" width="330" height="1" fill="#4c4c4c"/><rect x="0" y="189" width="330" height="1" fill="#4c4c4c"/><rect x="0" y="199" width="330" height="1" fill="#4c4c4c"/><rect x="0" y="209" width="330" height="1" fill="#4c4c4c"/><rect x="0" y="219" width="330" height="1" fill="#4c4c4c"/><rect x="0" y="229" width="330" height="1" fill="#4c4c4c"/><rect x="0" y="239" width="330" height="1" fill="#4c4c4c"/><rect x="0" y="249" width="330" height="1" fill="#4c4c4c"/><rect x="165" y="0" width="1" height="258" fill="#8e988e"/><rect x="0" y="129" width="330" height="1" fill="#8e988e"/></g><line x1="144" y1="129.7" x2="202" y2="129.7" stroke="#e0e0e0" stroke-width="1.3"/><line x1="186" y1="129.3" x2="193" y2="129.3" stroke="#f0f0f0" stroke-width="2"/><line x1="194" y1="129" x2="202" y2="129" stroke="#f0f0f0" stroke-width="2.4"/><rect x="113.5" y="129" width="2.2" height="1.8" fill="#c8c8c8"/><rect x="129" y="129" width="2.2" height="1.8" fill="#c8c8c8"/><rect x="142.39999999999998" y="129" width="2.2" height="1.8" fill="#c8c8c8"/><rect x="230.5" y="129" width="2.2" height="1.8" fill="#c8c8c8"/><rect x="214.5" y="123.5" width="6" height="6" fill="none" stroke="#e0e0e0" stroke-width="1"/></svg></div><div class="a" style="left:342px;top:64px;width:332px;height:260px;background:#f4f4f4;border-top:1px solid #b8b8c8;border-left:1px solid #b8b8c8"></div><div class="a" style="left:343px;top:65px;width:330px;height:258px;background:#033d52;overflow:hidden"><svg style="left:0;top:0" width="330" height="258"><defs><filter id="spk" x="0" y="0" width="100%" height="100%" color-interpolation-filters="sRGB"><feTurbulence type="fractalNoise" baseFrequency="0.75" numOctaves="2" seed="2" result="n"/><feColorMatrix in="n" type="matrix" values="1 0 0 0 0  1 0 0 0 0  1 0 0 0 0  0 0 0 0 1" result="g"/><feComposite in="SourceGraphic" in2="g" operator="arithmetic" k1="0" k2="1" k3="0.20" k4="-0.10" result="m"/><feComposite in="m" in2="SourceGraphic" operator="in"/></filter><filter id="spk2" x="0" y="0" width="100%" height="100%" color-interpolation-filters="sRGB"><feTurbulence type="fractalNoise" baseFrequency="0.6" numOctaves="2" seed="7" result="n"/><feColorMatrix in="n" type="matrix" values="1 0 0 0 0  1 0 0 0 0  1 0 0 0 0  0 0 0 0 1" result="g"/><feComposite in="SourceGraphic" in2="g" operator="arithmetic" k1="0" k2="1" k3="0.42" k4="-0.20" result="m"/><feComposite in="m" in2="SourceGraphic" operator="in"/></filter></defs><polygon points="127.0,51.0 207.0,54.5 304.5,59.0 277.0,60.0 207.0,59.5 127.0,54.5" fill="#38464a" /><polygon points="182.0,58.0 234.0,59.5 234.0,63.2 182.0,62.0" fill="#626666" /><polygon points="100.0,50.0 112.0,48.5 137.0,47.7 207.0,50.0 294.0,52.7 304.5,59.0 207.0,54.5 137.0,51.0" fill="#a08476" /><polygon points="131.5,44.3 283.5,47.0 294.0,52.7 207.0,50.0 137.0,47.7 112.0,48.5" fill="#4f6a50" /><polygon points="146.0,40.0 160.0,40.0 160.0,51.5 146.0,51.5" fill="#8a6a62" /><polygon points="147.0,41.0 159.0,41.0 159.0,42.5 147.0,42.5" fill="#c8b8b0" /><polygon points="147.0,44.5 159.0,44.5 159.0,46.5 147.0,46.5" fill="#7a3a38" /><polygon points="147.0,48.0 159.0,48.0 159.0,49.5 147.0,49.5" fill="#b8a098" /><g filter="url(#spk)"><polygon points="75.5,80.0 138.5,56.0 177.0,54.5 233.0,59.8 233.0,63.2 188.0,62.2 203.0,66.8 203.0,73.8 191.0,74.8 198.0,79.0 196.0,91.0 75.5,85.0" fill="#7c7c7c" /></g><line x1="76.0" y1="80.0" x2="139.0" y2="56.3" stroke="#b0b0b0" stroke-width="1"/><line x1="134.0" y1="85.5" x2="174.0" y2="55.0" stroke="#b8b8b8" stroke-width="1"/><line x1="137.0" y1="86.0" x2="177.0" y2="55.5" stroke="#3e3e3e" stroke-width="1.2"/><line x1="140.0" y1="86.5" x2="179.5" y2="56.0" stroke="#b0b0b0" stroke-width="1"/><line x1="109.0" y1="68.0" x2="182.0" y2="69.5" stroke="#a8a8a8" stroke-width="0.9"/><line x1="105.0" y1="70.0" x2="182.0" y2="71.5" stroke="#505050" stroke-width="0.9"/><line x1="127.0" y1="61.0" x2="184.0" y2="62.5" stroke="#a8a8a8" stroke-width="0.9"/><line x1="157.0" y1="74.0" x2="197.0" y2="75.0" stroke="#a8a8a8" stroke-width="0.9"/><line x1="76.0" y1="81.2" x2="197.0" y2="88.5" stroke="#a8a8a8" stroke-width="1"/><line x1="76.0" y1="82.8" x2="197.0" y2="90.0" stroke="#4a4a4a" stroke-width="1"/><line x1="184.0" y1="57.5" x2="232.5" y2="59.8" stroke="#8a8a8a" stroke-width="1"/><g filter="url(#spk)"><polygon points="41.0,83.0 54.0,78.8 295.0,106.5 300.0,116.0 41.0,88.0" fill="#7e7e7e" /></g><line x1="59.0" y1="80.0" x2="257.0" y2="102.8" stroke="#9a9a9a" stroke-width="0.9"/><g filter="url(#spk2)"><polygon points="36.0,87.0 41.0,83.0 300.0,116.0 303.0,125.5 36.0,89.5" fill="#3b5a3c" /></g><polygon points="0.0,84.8 330.0,129.3 330.0,258.0 0.0,258.0" fill="#6a6060" /><g filter="url(#spk)"><polygon points="0.0,84.5 330.0,129.0 330.0,161.0 0.0,102.5" fill="#a98b80" /><polygon points="0.0,102.5 330.0,161.0 330.0,175.0 0.0,111.5" fill="#4a474e" /><polygon points="0.0,124.2 330.0,198.0 330.0,258.0 152.0,258.0 0.0,197.7" fill="#a98a80" /><polygon points="0.0,216.0 123.0,258.0 0.0,258.0" fill="#4b6659" /></g><g filter="url(#spk2)"><polygon points="0.0,111.5 330.0,175.0 330.0,198.0 0.0,124.2" fill="#3c573c" /><polygon points="0.0,197.7 152.0,258.0 123.0,258.0 0.0,216.0" fill="#36502f" /></g></svg></div><div class="a" style="left:678px;top:44px;width:122px;height:566px;background:#ece9d8"></div><div class="a" style="left:679px;top:44px;width:1px;height:564px;background:#fff"></div><div class="a" style="left:797px;top:44px;width:1px;height:564px;background:#aca899"></div><div class="a" style="left:680px;top:607px;width:118px;height:1px;background:#aca899"></div><div class="a" style="left:682px;top:48px;width:108px;height:1px;background:#c0bcac"></div><div class="a" style="left:682px;top:49px;width:108px;height:1px;background:#fff"></div><div class="a" style="left:682px;top:51px;width:108px;height:1px;background:#c0bcac"></div><div class="a" style="left:682px;top:52px;width:108px;height:1px;background:#fff"></div><svg style="left:793px;top:47.5px;" width="5" height="5" viewBox="0 0 5 5"><path d="M0.5,0.5 L4.5,4.5 M4.5,0.5 L0.5,4.5" stroke="#000" stroke-width="1.1"/></svg><div class="a" style="left:683px;top:55px;width:62px;height:12.5px;background:#f3f1e8;border-right:1px solid #d8d4c4"></div><div class="t" style="left:686px;top:58.5px;font-size:6.7px;color:#333;font-weight:normal;">Objects</div><div class="a" style="left:713px;top:57px;width:1px;height:10px;background:#8a887c"></div><div class="t" style="left:717.5px;top:58.5px;font-size:6.7px;color:#333;font-weight:normal;">Views</div><div class="t" style="left:749px;top:58.5px;font-size:6.7px;color:#333;font-weight:normal;">Textures</div><div class="a" style="left:778px;top:56px;width:10px;height:10px;background:#eeebdc;border-right:1px solid #716f64;border-bottom:1px solid #716f64"></div><svg style="left:781px;top:59px;" width="4" height="5" viewBox="0 0 4 5"><path d="M3.5,0 L0.5,2.5 L3.5,5 Z" fill="#000"/></svg><div class="a" style="left:788px;top:56px;width:10px;height:10px;background:#eeebdc;border-right:1px solid #716f64;border-bottom:1px solid #716f64"></div><svg style="left:791.5px;top:59px;" width="4" height="5" viewBox="0 0 4 5"><path d="M0.5,0 L3.5,2.5 L0.5,5 Z" fill="#000"/></svg><div class="a" style="left:683px;top:68px;width:112px;height:538px;background:#efede2;border-left:1px solid #fff;border-top:1px solid #fff;border-right:1px solid #9c9a8c;border-bottom:1px solid #9c9a8c"></div><div class="a" style="left:689px;top:74.5px;width:103px;height:9.5px;background:#f1efe4;border-left:1px solid #fff;border-top:1px solid #fff;border-right:1px solid #c8c4b4;border-bottom:1px solid #c8c4b4"></div><div class="t" style="left:689px;top:76.3px;width:103px;text-align:center;font-size:6.8px;color:#000">Object</div><div class="a" style="left:690px;top:84px;width:99px;height:54px;background:#ece9d8;border-top:1px solid #6e6c62;border-left:1px solid #6e6c62;border-right:1px solid #fff;border-bottom:2px solid #8c8a7e;box-shadow:inset 1px 1px 0 #fbfaf4"></div><div class="a" style="left:720px;top:86px;width:40px;height:40px;background:#000"></div><div class="a" style="left:689px;top:143.5px;width:103px;height:8.5px;background:#f1efe4;border-left:1px solid #fff;border-top:1px solid #fff;border-right:1px solid #c8c4b4;border-bottom:1px solid #c8c4b4"></div><div class="t" style="left:689px;top:145.3px;width:103px;text-align:center;font-size:6.8px;color:#000">Texture</div><div class="a" style="left:690px;top:152px;width:99px;height:54px;background:#ece9d8;border-top:1px solid #6e6c62;border-left:1px solid #6e6c62;border-right:1px solid #fff;border-bottom:2px solid #8c8a7e;box-shadow:inset 1px 1px 0 #fbfaf4"></div><div class="a" style="left:720px;top:155px;width:40px;height:39px;background:#000"></div><div class="a" style="left:689px;top:211.5px;width:103px;height:7.5px;background:#f1efe4;border-left:1px solid #fff;border-top:1px solid #fff;border-right:1px solid #c8c4b4;border-bottom:1px solid #c8c4b4"></div><div class="t" style="left:689px;top:213.3px;width:103px;text-align:center;font-size:6.8px;color:#000">default.wad</div><div class="a" style="left:689px;top:222px;width:103px;height:8px;background:#f1efe4;border-left:1px solid #fff;border-top:1px solid #fff;border-right:1px solid #c8c4b4;border-bottom:1px solid #c8c4b4"></div><div class="t" style="left:689px;top:223.8px;width:103px;text-align:center;font-size:6.8px;color:#000">standard.wad</div><div class="a" style="left:690px;top:232px;width:96px;height:201px;background:#000"></div><div class="a" style="left:786px;top:232px;width:4px;height:201px;background:#d8d4c4"></div><div class="a" style="left:786px;top:232px;width:4px;height:78px;background:#fbfaf4;border:1px solid #c8c4b4"></div><div class="a" style="left:689px;top:433px;width:101px;height:3px;background:#e0dccc"></div><div class="a" style="left:689px;top:438.5px;width:103px;height:8.5px;background:#f1efe4;border-left:1px solid #fff;border-top:1px solid #fff;border-right:1px solid #c8c4b4;border-bottom:1px solid #c8c4b4"></div><div class="t" style="left:689px;top:440.3px;width:103px;text-align:center;font-size:6.8px;color:#000">textures</div><div class="a" style="left:690px;top:448px;width:96px;height:115px;background:#000"></div><div class="a" style="left:786px;top:448px;width:3px;height:115px;background:#f4f2ea"></div><div class="a" style="left:692.7px;top:234.5px;width:20px;height:20.0px;overflow:hidden;background:radial-gradient(circle at 30% 30%,#e8a020 0 15%,transparent 30%),radial-gradient(circle at 70% 60%,#f0b830 0 12%,transparent 28%),radial-gradient(circle at 40% 80%,#e09020 0 10%,transparent 25%),#8a3a10"></div><div class="a" style="left:715.0px;top:234.5px;width:20px;height:20.0px;overflow:hidden;background:repeating-linear-gradient(30deg,#a8b8d8 0px,#c8d4ec 2.0px,#a8b8d8 4px),#a8b8d8;"></div><div class="a" style="left:737.4px;top:234.5px;width:20px;height:20.0px;overflow:hidden;background:repeating-linear-gradient(60deg,#4a6098 0px,#7890c0 1.5px,#4a6098 3px),#4a6098;"></div><div class="a" style="left:759.7px;top:234.5px;width:20px;height:20.0px;overflow:hidden;background:repeating-linear-gradient(30deg,#6a80b0 0px,#8ea0c8 1.5px,#6a80b0 3px),#6a80b0;"></div><div class="a" style="left:692.7px;top:256.9px;width:20px;height:20.0px;overflow:hidden;background:repeating-linear-gradient(45deg,#282858 0px,#9aa0d8 2.0px,#282858 4px),#282858;"></div><div class="a" style="left:715.0px;top:256.9px;width:20px;height:20.0px;overflow:hidden;background:repeating-linear-gradient(90deg,#3a2a1e 0px,#5a4634 1.5px,#3a2a1e 3px),#3a2a1e;"></div><div class="a" style="left:737.4px;top:256.9px;width:20px;height:20.0px;overflow:hidden;background:#1c1e6a"></div><div class="a" style="left:759.7px;top:256.9px;width:20px;height:20.0px;overflow:hidden;background:linear-gradient(45deg,transparent 45%,#5a3020 45% 55%,transparent 55%),linear-gradient(-45deg,transparent 45%,#5a3020 45% 55%,transparent 55%),#7a4a2e"></div><div class="a" style="left:692.7px;top:279.3px;width:20px;height:20.0px;overflow:hidden;background:repeating-linear-gradient(45deg,#505860 0px,#8a9298 1.5px,#505860 3px),#505860;"></div><div class="a" style="left:715.0px;top:279.3px;width:20px;height:20.0px;overflow:hidden;background:repeating-linear-gradient(0deg,#5a483c 0 4px,#2a2420 4px 5px),#4a3a30"></div><div class="a" style="left:737.4px;top:279.3px;width:20px;height:20.0px;overflow:hidden;background:repeating-linear-gradient(60deg,#d8d0c0 0px,#c4b8a4 2.0px,#d8d0c0 4px),#d8d0c0;"></div><div class="a" style="left:759.7px;top:279.3px;width:20px;height:20.0px;overflow:hidden;background:#fcfcfc"></div><div class="a" style="left:692.7px;top:301.7px;width:20px;height:20.0px;overflow:hidden;background:#fff6cc"></div><div class="a" style="left:715.0px;top:301.7px;width:20px;height:20.0px;overflow:hidden;background:#cddcfc"></div><div class="a" style="left:737.4px;top:301.7px;width:20px;height:20.0px;overflow:hidden;background:repeating-linear-gradient(80deg,#4e3a28 0px,#6a523a 1.5px,#4e3a28 3px),#4e3a28;"></div><div class="a" style="left:759.7px;top:301.7px;width:20px;height:20.0px;overflow:hidden;background:linear-gradient(90deg,#3a342c 50%,#c8c0b0 50%) 0 0/20px 10px no-repeat,linear-gradient(90deg,#d8d0c0 50%,#3a342c 50%) 0 10px/20px 10px no-repeat,#808070"></div><div class="a" style="left:692.7px;top:324.1px;width:20px;height:20.0px;overflow:hidden;background:repeating-linear-gradient(45deg,#2a2622 0px,#6a6058 1.0px,#2a2622 2px),#2a2622;"></div><div class="a" style="left:715.0px;top:324.1px;width:20px;height:20.0px;overflow:hidden;background:repeating-linear-gradient(45deg,#bcb0ac 0px,#e4dcd8 1.0px,#bcb0ac 2px),#bcb0ac;"></div><div class="a" style="left:737.4px;top:324.1px;width:20px;height:20.0px;overflow:hidden;background:repeating-linear-gradient(120deg,#5e5044 0px,#857262 2.0px,#5e5044 4px),#5e5044;"></div><div class="a" style="left:759.7px;top:324.1px;width:20px;height:20.0px;overflow:hidden;background:repeating-linear-gradient(60deg,#9a7a66 0px,#b89a84 2.0px,#9a7a66 4px),#9a7a66;"></div><div class="a" style="left:692.7px;top:346.5px;width:20px;height:20.0px;overflow:hidden;background:linear-gradient(90deg,#111 25%,#a04a20 25% 75%,#111 75%)"></div><div class="a" style="left:715.0px;top:346.5px;width:20px;height:20.0px;overflow:hidden;background:linear-gradient(90deg,#111 25%,#505050 25% 75%,#111 75%)"></div><div class="a" style="left:737.4px;top:346.5px;width:20px;height:20.0px;overflow:hidden;background:repeating-linear-gradient(45deg,#9a8050 0px,#b49868 1.5px,#9a8050 3px),#9a8050;"></div><div class="a" style="left:759.7px;top:346.5px;width:20px;height:20.0px;overflow:hidden;background:repeating-linear-gradient(90deg,#4a3a2a 0px,#6a5a46 2.0px,#4a3a2a 4px),#4a3a2a;"></div><div class="a" style="left:692.7px;top:368.9px;width:20px;height:20.0px;overflow:hidden;background:repeating-linear-gradient(45deg,#3a2a20 0px,#6a5440 1.0px,#3a2a20 2px),#3a2a20;"></div><div class="a" style="left:715.0px;top:368.9px;width:20px;height:20.0px;overflow:hidden;background:repeating-linear-gradient(30deg,#8a8a8a 0px,#a0a0a0 2.0px,#8a8a8a 4px),#8a8a8a;"></div><div class="a" style="left:737.4px;top:368.9px;width:20px;height:20.0px;overflow:hidden;background:repeating-linear-gradient(30deg,#929292 0px,#a8a8a8 2.0px,#929292 4px),#929292;"></div><div class="a" style="left:759.7px;top:368.9px;width:20px;height:20.0px;overflow:hidden;background:repeating-linear-gradient(30deg,#9a9a9a 0px,#acacac 2.0px,#9a9a9a 4px),#9a9a9a;"></div><div class="a" style="left:692.7px;top:391.3px;width:20px;height:20.0px;overflow:hidden;background:repeating-linear-gradient(45deg,#4a6030 0px,#6a7a48 1.5px,#4a6030 3px),#4a6030;"></div><div class="a" style="left:715.0px;top:391.3px;width:20px;height:20.0px;overflow:hidden;background:#1ea01e"></div><div class="a" style="left:737.4px;top:391.3px;width:20px;height:20.0px;overflow:hidden;background:repeating-linear-gradient(90deg,#3a3a3a 0px,#4a4a4a 1.0px,#3a3a3a 2px),#3a3a3a;"></div><div class="a" style="left:759.7px;top:391.3px;width:20px;height:20.0px;overflow:hidden;background:repeating-linear-gradient(45deg,#787878 0px,#909090 1.0px,#787878 2px),#787878;"></div><div class="a" style="left:692.7px;top:413.7px;width:20px;height:19.3px;overflow:hidden;background:linear-gradient(90deg,#111 20%,#c8c0b0 20% 80%,#111 80%)"></div><div class="a" style="left:715.0px;top:413.7px;width:20px;height:19.3px;overflow:hidden;background:linear-gradient(#f0f0f0,#f0f0f0) center/7px 7px no-repeat,#464646"></div><div class="a" style="left:737.4px;top:413.7px;width:20px;height:19.3px;overflow:hidden;background:linear-gradient(#f4f4f4,#f4f4f4) center/8px 8px no-repeat,linear-gradient(#3a3a3a,#3a3a3a) center/12px 12px no-repeat,#8a8a8a"></div><div class="a" style="left:759.7px;top:413.7px;width:20px;height:19.3px;overflow:hidden;background:#f4f4f4"></div><div class="a" style="left:692.7px;top:450.2px;width:20px;height:20.0px;overflow:hidden;background:linear-gradient(90deg,#88b0e8 15%,#1a2a40 15% 25%,#f0f4ff 25% 40%,#1a2a40 40% 55%,#f0f4ff 55% 70%,#1a2a40 70% 80%,#88b0e8 80%)"></div><div class="a" style="left:715.0px;top:450.2px;width:20px;height:20.0px;overflow:hidden;background:linear-gradient(90deg,#3a3020 12%,#c0b090 12% 35%,#3a3020 35% 45%,#c0b090 45% 70%,#3a3020 70% 80%,#c0b090 80% 88%,#3a3020 88%)"></div><div class="a" style="left:737.4px;top:450.2px;width:20px;height:20.0px;overflow:hidden;background:radial-gradient(circle at 30% 30%,#5a6070 0 10%,transparent 12%),radial-gradient(circle at 70% 30%,#5a6070 0 10%,transparent 12%),radial-gradient(circle at 30% 75%,#5a6070 0 10%,transparent 12%),radial-gradient(circle at 70% 75%,#5a6070 0 10%,transparent 12%),#d8d8e0"></div><div class="a" style="left:759.7px;top:450.2px;width:20px;height:20.0px;overflow:hidden;background:repeating-linear-gradient(45deg,#bcbcbc 0px,#cccccc 1.0px,#bcbcbc 2px),#bcbcbc;"></div><div class="a" style="left:692.7px;top:472.6px;width:20px;height:20.0px;overflow:hidden;background:repeating-linear-gradient(20deg,#3a6aa0 0px,#8ab8d8 1.5px,#3a6aa0 3px),#3a6aa0;"></div><div class="a" style="left:715.0px;top:472.6px;width:20px;height:20.0px;overflow:hidden;background:linear-gradient(#3a3a30,#3a3a30) center/9px 9px no-repeat,#d8b478"></div><div class="a" style="left:737.4px;top:472.6px;width:20px;height:20.0px;overflow:hidden;background:repeating-linear-gradient(30deg,#a89a70 0px,#c0b088 2.0px,#a89a70 4px),#a89a70;"></div><div class="a" style="left:759.7px;top:472.6px;width:20px;height:20.0px;overflow:hidden;background:repeating-linear-gradient(90deg,#3c3c3c 0px,#4a4a4a 1.5px,#3c3c3c 3px),#3c3c3c;"></div><div class="a" style="left:692.7px;top:495.0px;width:20px;height:20.0px;overflow:hidden;background:repeating-linear-gradient(45deg,#585850 0px,#6a6a62 1.0px,#585850 2px),#585850;"></div><div class="a" style="left:715.0px;top:495.0px;width:20px;height:20.0px;overflow:hidden;background:repeating-linear-gradient(45deg,#646a5a 0px,#8a8a78 1.5px,#646a5a 3px),#646a5a;"></div><div class="a" style="left:737.4px;top:495.0px;width:20px;height:20.0px;overflow:hidden;background:repeating-linear-gradient(90deg,#a8a8a8 0 4px,transparent 4px 7px) 0 9px/20px 2px no-repeat,#404040"></div><div class="a" style="left:759.7px;top:495.0px;width:20px;height:20.0px;overflow:hidden;background:repeating-linear-gradient(90deg,transparent 0 4px,#b0b0b0 4px 9px,transparent 9px 12px) 0 10px/20px 2px no-repeat,#424242"></div><div class="a" style="left:692.7px;top:517.4px;width:20px;height:20.0px;overflow:hidden;background:repeating-linear-gradient(90deg,#a0a0a0 0 4px,transparent 4px 7px) 0 10px/20px 1.5px no-repeat,#424242"></div><div class="a" style="left:715.0px;top:517.4px;width:20px;height:20.0px;overflow:hidden;background:repeating-linear-gradient(90deg,#a8a8a8 0 4px,transparent 4px 7px) 0 13px/20px 1.5px no-repeat,linear-gradient(#6a6040,#6a6040) 0 0/20px 1px no-repeat,#444"></div><div class="a" style="left:737.4px;top:517.4px;width:20px;height:20.0px;overflow:hidden;background:repeating-linear-gradient(90deg,#a8a8a8 0 4px,transparent 4px 7px) 0 6px/20px 1.5px no-repeat,repeating-linear-gradient(90deg,#a8a8a8 0 4px,transparent 4px 7px) 0 13px/20px 1.5px no-repeat,#444"></div><div class="a" style="left:759.7px;top:517.4px;width:20px;height:20.0px;overflow:hidden;background:repeating-linear-gradient(45deg,#c4c4c4 0px,#d4d4d4 1.0px,#c4c4c4 2px),#c4c4c4;"></div><div class="a" style="left:692.7px;top:539.8px;width:20px;height:20.0px;overflow:hidden;background:repeating-linear-gradient(45deg,#7a7a7a 0px,#8a8a8a 1.5px,#7a7a7a 3px),#7a7a7a;"></div><div class="a" style="left:715.0px;top:539.8px;width:20px;height:20.0px;overflow:hidden;background:repeating-linear-gradient(45deg,#3a6020 0px,#4a7030 1.5px,#3a6020 3px),#3a6020;"></div><div class="a" style="left:737.4px;top:539.8px;width:20px;height:20.0px;overflow:hidden;background:repeating-linear-gradient(20deg,#2a7a98 0px,#4a98b8 1.5px,#2a7a98 3px),#2a7a98;"></div><div class="a" style="left:759.7px;top:539.8px;width:20px;height:20.0px;overflow:hidden;background:repeating-linear-gradient(45deg,#b0aca8 0px,#c0bcb8 1.5px,#b0aca8 3px),#b0aca8;"></div><div class="a" style="left:0px;top:609px;width:800px;height:13px;background:#ece9d8"></div><div class="a" style="left:0px;top:609.5px;width:679px;height:1px;background:#f8f6ee"></div><div class="t" style="left:2px;top:613.5px;font-size:6.8px;color:#333;font-weight:normal;">Ready</div><div class="a" style="left:148px;top:611px;width:133px;height:11px;border-top:1px solid #b8b4a4;border-left:1px solid #b8b4a4"></div><div class="t" style="left:149.5px;top:613.5px;font-size:6.8px;color:#333;font-weight:normal;">Object Select</div><div class="a" style="left:282px;top:611px;width:260px;height:11px;border-top:1px solid #b8b4a4;border-left:1px solid #b8b4a4;border-right:1px solid #fff"></div><div class="t" style="left:283.5px;top:613.5px;font-size:6.8px;color:#333;font-weight:normal;">Top (XY):</div><div class="t" style="left:454.5px;top:613.5px;font-size:6.8px;color:#333;font-weight:normal;">18554.338 -5998.167 0.000</div><div class="a" style="left:0px;top:622px;width:800px;height:18px;background:linear-gradient(to bottom,#3a8af8 0px,#2464e8 1.5px,#245edb 4px,#2a62dc 12px,#1e52c8 18px)"></div><div class="a" style="left:0px;top:622px;width:69px;height:18px;background:linear-gradient(to bottom,#58b858 0px,#3c9e3c 3px,#3a9a3a 12px,#2e8030 18px);border-radius:0 8px 8px 0"></div><svg style="left:7px;top:626px;" width="11" height="11" viewBox="0 0 11 11"><path d="M0.5,1.5 Q2.5,0.5 5,1.5 V5 Q2.5,4 0.5,5 Z" fill="#e8581c"/><path d="M5.5,1.5 Q8,2.5 10.5,1.5 V5 Q8,6 5.5,5 Z" fill="#5ac02a"/><path d="M0.5,5.5 Q2.5,4.5 5,5.5 V9 Q2.5,8 0.5,9 Z" fill="#2870e8"/><path d="M5.5,5.5 Q8,6.5 10.5,5.5 V9 Q8,10 5.5,9 Z" fill="#f8c818"/></svg><div class="t" style="left:22px;top:624.5px;font-size:11px;color:#fff;font-weight:bold;font-style:italic;text-shadow:1px 1px 0 rgba(0,0,0,.3)">Iniciar</div><div class="a" style="left:75.5px;top:624.5px;width:56.5px;height:15px;background:linear-gradient(to bottom,#4a8cf8,#3c7ef0 30%,#3878ec 70%,#3470e4);border-radius:2px;border-top:1px solid #6aa4ff"></div><svg style="left:81.5px;top:626.5px;" width="10" height="10" viewBox="0 0 10 10"><circle cx="4" cy="3" r="2.2" fill="#78c850"/><rect x="1.5" y="5" width="6" height="4.5" rx="2" fill="#58a830"/><path d="M7,0.5 L9.5,2 L8,4 Z" fill="#fff"/></svg><div class="t" style="left:93.8px;top:627.5px;font-size:7.2px;color:#fff;font-weight:normal;">(F)o He...</div><div class="a" style="left:133px;top:624.5px;width:56.5px;height:15px;background:linear-gradient(to bottom,#4a8cf8,#3c7ef0 30%,#3878ec 70%,#3470e4);border-radius:2px;border-top:1px solid #6aa4ff"></div><svg style="left:139px;top:626.5px;" width="10" height="10" viewBox="0 0 10 10"><circle cx="5" cy="5" r="4.5" fill="#e86a10"/><circle cx="5.5" cy="4.5" r="2.8" fill="#3050b0"/><path d="M1,3 Q3,8 8,8 Q4,9 1.5,6 Z" fill="#f8a020"/></svg><div class="t" style="left:151.3px;top:627.5px;font-size:7.2px;color:#fff;font-weight:normal;">Très D...</div><div class="a" style="left:190.5px;top:624.5px;width:56.5px;height:15px;background:linear-gradient(to bottom,#4a8cf8,#3c7ef0 30%,#3878ec 70%,#3470e4);border-radius:2px;border-top:1px solid #6aa4ff"></div><svg style="left:196.5px;top:626.5px;" width="10" height="10" viewBox="0 0 10 10"><circle cx="5" cy="5" r="4.5" fill="#e86a10"/><circle cx="5.5" cy="4.5" r="2.8" fill="#3050b0"/><path d="M1,3 Q3,8 8,8 Q4,9 1.5,6 Z" fill="#f8a020"/></svg><div class="t" style="left:208.8px;top:627.5px;font-size:7.2px;color:#fff;font-weight:normal;">GameS...</div><div class="a" style="left:248px;top:624.5px;width:56.5px;height:15px;background:linear-gradient(to bottom,#4a8cf8,#3c7ef0 30%,#3878ec 70%,#3470e4);border-radius:2px;border-top:1px solid #6aa4ff"></div><svg style="left:254px;top:626.5px;" width="10" height="10" viewBox="0 0 10 10"><circle cx="5" cy="5" r="4.5" fill="#e86a10"/><circle cx="5.5" cy="4.5" r="2.8" fill="#3050b0"/><path d="M1,3 Q3,8 8,8 Q4,9 1.5,6 Z" fill="#f8a020"/></svg><div class="t" style="left:266.3px;top:627.5px;font-size:7.2px;color:#fff;font-weight:normal;">LW 2 M...</div><div class="a" style="left:305.5px;top:624.5px;width:56.5px;height:15px;background:linear-gradient(to bottom,#4a8cf8,#3c7ef0 30%,#3878ec 70%,#3470e4);border-radius:2px;border-top:1px solid #6aa4ff"></div><svg style="left:311.5px;top:626.5px;transform:scale(1.0);transform-origin:0 0" width="10" height="10" viewBox="0 0 10 10"><path d="M3.2,6.6 Q3.5,1.2 6.6,0.4 L5,6.8 Z" fill="#20206a" opacity="0.85"/><ellipse cx="6.8" cy="3.4" rx="2.5" ry="3" fill="#f8e040"/><ellipse cx="6.5" cy="2.4" rx="1.5" ry="1.4" fill="#fffad0"/><path d="M5,5.2 Q7,6.6 9.2,4.6" stroke="#e86a20" stroke-width="0.8" fill="none"/><rect x="0.3" y="6.8" width="8.2" height="3.2" rx="0.6" fill="#f0c000" stroke="#2a2a50" stroke-width="0.5"/><rect x="1.2" y="7.6" width="6" height="1" fill="#ffe860"/></svg><div class="t" style="left:323.8px;top:627.5px;font-size:7.2px;color:#fff;font-weight:normal;">D:\Cen...</div><div class="a" style="left:363px;top:624.5px;width:56.5px;height:15px;background:linear-gradient(to bottom,#4a8cf8,#3c7ef0 30%,#3878ec 70%,#3470e4);border-radius:2px;border-top:1px solid #6aa4ff"></div><svg style="left:369px;top:626.5px;" width="10" height="10" viewBox="0 0 10 10"><circle cx="3" cy="3" r="1.8" fill="#58c040"/><circle cx="7" cy="3" r="1.8" fill="#3a90e0"/><rect x="1" y="5" width="4" height="4" rx="1.5" fill="#40a030"/><rect x="5" y="5" width="4" height="4" rx="1.5" fill="#2a70c0"/></svg><div class="t" style="left:381.3px;top:627.5px;font-size:7.2px;color:#fff;font-weight:normal;">Windo...</div><div class="a" style="left:420.5px;top:624.5px;width:56.5px;height:15px;background:linear-gradient(to bottom,#4a8cf8,#3c7ef0 30%,#3878ec 70%,#3470e4);border-radius:2px;border-top:1px solid #6aa4ff"></div><svg style="left:426.5px;top:626.5px;" width="10" height="10" viewBox="0 0 10 10"><circle cx="4" cy="3" r="2.2" fill="#78c850"/><rect x="1.5" y="5" width="6" height="4.5" rx="2" fill="#58a830"/><path d="M7,0.5 L9.5,2 L8,4 Z" fill="#fff"/></svg><div class="t" style="left:438.8px;top:627.5px;font-size:7.2px;color:#fff;font-weight:normal;">Vinicius ...</div><div class="a" style="left:478px;top:624.5px;width:56.5px;height:15px;background:linear-gradient(to bottom,#4a8cf8,#3c7ef0 30%,#3878ec 70%,#3470e4);border-radius:2px;border-top:1px solid #6aa4ff"></div><svg style="left:484px;top:626.5px;" width="10" height="10" viewBox="0 0 10 10"><path d="M0.5,2 H4 L5,3 H9.5 V9 H0.5 Z" fill="#f0d060" stroke="#b08820" stroke-width="0.6"/></svg><div class="t" style="left:496.3px;top:627.5px;font-size:7.2px;color:#fff;font-weight:normal;">ZMODE...</div><div class="a" style="left:535.5px;top:624.5px;width:56.5px;height:15px;background:linear-gradient(to bottom,#4a8cf8,#3c7ef0 30%,#3878ec 70%,#3470e4);border-radius:2px;border-top:1px solid #6aa4ff"></div><svg style="left:541.5px;top:626.5px;" width="10" height="10" viewBox="0 0 10 10"><text x="0" y="7.5" font-size="7" font-weight="bold" fill="#0a1a90" font-family="Liberation Sans">SO</text></svg><div class="t" style="left:553.8px;top:627.5px;font-size:7.2px;color:#fff;font-weight:normal;">Sem tít...</div><div class="a" style="left:595.5px;top:624.5px;width:58px;height:15px;background:linear-gradient(to bottom,#1e4cb8,#1c48b0 50%,#2250c0);border-radius:2px;border-top:1px solid #184090"></div><svg style="left:601.5px;top:626.5px;transform:scale(1.0);transform-origin:0 0" width="10" height="10" viewBox="0 0 10 10"><path d="M3.2,6.6 Q3.5,1.2 6.6,0.4 L5,6.8 Z" fill="#20206a" opacity="0.85"/><ellipse cx="6.8" cy="3.4" rx="2.5" ry="3" fill="#f8e040"/><ellipse cx="6.5" cy="2.4" rx="1.5" ry="1.4" fill="#fffad0"/><path d="M5,5.2 Q7,6.6 9.2,4.6" stroke="#e86a20" stroke-width="0.8" fill="none"/><rect x="0.3" y="6.8" width="8.2" height="3.2" rx="0.6" fill="#f0c000" stroke="#2a2a50" stroke-width="0.5"/><rect x="1.2" y="7.6" width="6" height="1" fill="#ffe860"/></svg><div class="t" style="left:613.8px;top:627.5px;font-size:7.2px;color:#fff;font-weight:normal;">WED - ...</div><div class="t" style="left:659.5px;top:627.5px;font-size:7.2px;color:#9ab8f0;font-weight:normal;">Central</div><div class="t" style="left:687px;top:624px;font-size:7px;color:#dde8ff;font-weight:bold;">»</div><div class="t" style="left:699px;top:628px;font-size:7.2px;color:#fff;font-weight:normal;">PT</div><div class="a" style="left:720px;top:622px;width:80px;height:18px;background:linear-gradient(to bottom,#20a8f8 0px,#0c90ec 2px,#0b8ae8 12px,#0a7cd8 18px);border-left:1px solid #0a64c8"></div><svg style="left:715px;top:626px;" width="10" height="10" viewBox="0 0 10 10"><circle cx="5" cy="5" r="4.5" fill="#48a0f8" stroke="#c8e4ff" stroke-width="0.8"/><path d="M6,2.5 L3.5,5 L6,7.5" stroke="#fff" stroke-width="1.4" fill="none"/></svg><svg style="left:727.5px;top:626px;" width="10" height="10" viewBox="0 0 10 10"><circle cx="4.5" cy="4.8" r="4.2" fill="#101838"/><text x="2" y="7.8" font-size="7" font-weight="bold" fill="#fff" font-family="Liberation Sans">K</text></svg><svg style="left:738.5px;top:625.5px;" width="9" height="11" viewBox="0 0 9 11"><circle cx="4.5" cy="3" r="2.4" fill="#88d040"/><path d="M0.5,10 Q0.5,5.5 4.5,5.5 Q8.5,5.5 8.5,10 Z" fill="#60b030"/></svg><svg style="left:749px;top:625.5px;" width="10" height="11" viewBox="0 0 10 11"><rect x="0.5" y="4" width="5" height="4" fill="#a8c8f0" stroke="#3050a0" stroke-width="0.6"/><rect x="4" y="1" width="5" height="4" fill="#a8c8f0" stroke="#3050a0" stroke-width="0.6"/><path d="M2,9 H8" stroke="#3050a0"/></svg><svg style="left:760.5px;top:625.5px;" width="11" height="11" viewBox="0 0 11 11"><circle cx="5.2" cy="5.2" r="4.8" fill="#303848"/><circle cx="4.2" cy="4" r="2.2" fill="#8a96a8"/><text x="3.3" y="8" font-size="6.5" font-weight="bold" fill="#fff" font-family="Liberation Sans">8</text></svg><div class="t" style="left:776px;top:628px;font-size:7.2px;color:#fff;font-weight:normal;">12:42</div></body></html>
